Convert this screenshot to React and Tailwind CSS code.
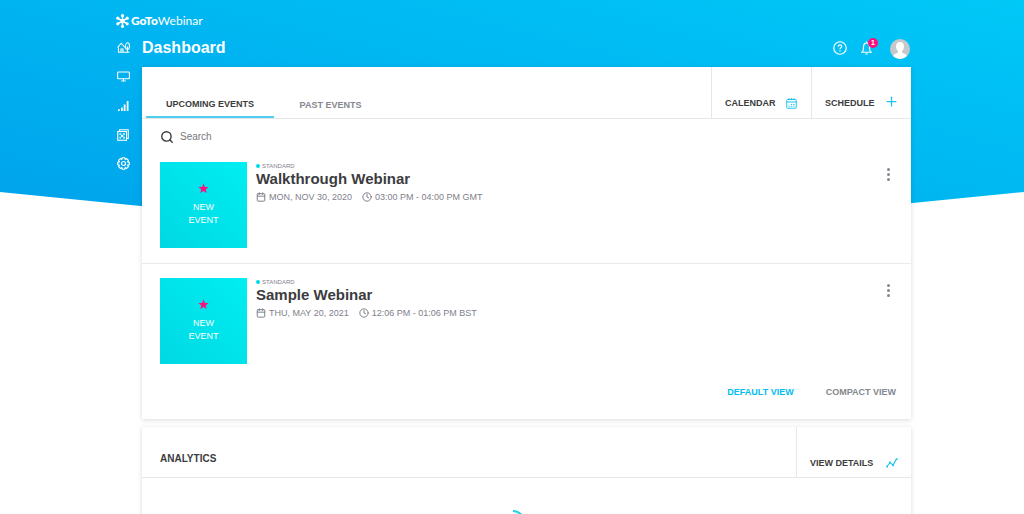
import { Search, Calendar, Clock, Plus } from 'lucide-react';

const events = [
  { id: 1, title: 'Walkthrough Webinar', date: 'MON, NOV 30, 2020', time: '03:00 PM - 04:00 PM GMT' },
  { id: 2, title: 'Sample Webinar', date: 'THU, MAY 20, 2021', time: '12:06 PM - 01:06 PM BST' },
];

const LogoMark = () => (
  <svg viewBox="0 0 26 28" className="w-[13px] h-[14px]" fill="none" stroke="currentColor" strokeWidth="3">
    <path d="M13 4v20M4.3 9l17.4 10M21.7 9L4.3 19" />
    <g fill="currentColor" stroke="none">
      <circle cx="13" cy="3.2" r="3.2" />
      <circle cx="13" cy="24.8" r="3.2" />
      <circle cx="3.6" cy="8.4" r="3.2" />
      <circle cx="22.4" cy="8.4" r="3.2" />
      <circle cx="3.6" cy="19.6" r="3.2" />
      <circle cx="22.4" cy="19.6" r="3.2" />
      <circle cx="13" cy="14" r="4" />
    </g>
  </svg>
);

const HomeIcon = () => (
  <svg viewBox="0 0 26 22" className="w-[13px] h-[11px]" fill="none" stroke="currentColor" strokeWidth="2.2">
    <path d="M1 11l7.500-8.500L16 11M3 9v11.500h22M8 20v-6h4v6" />
    <path d="M21 20V9M21 15c-3 0-4-2.500-4-5.500C17 5 19 1.500 21 1.500s4 3.500 4 8c0 3-1 5.500-4 5.500z" />
  </svg>
);

const ScreenIcon = () => (
  <svg viewBox="0 0 26 22" className="w-[13px] h-[11px]" fill="none" stroke="currentColor" strokeWidth="2.2">
    <rect x="1.200" y="2" width="23.600" height="13.500" rx="1.500" />
    <path d="M13 15.500V20M8.500 20h9" />
  </svg>
);

const BarsIcon = () => (
  <svg viewBox="0 0 24 24" className="w-3 h-3" fill="currentColor">
    <path d="M2 18.500h3.500V22H2zM8 15h3.500v7H8zM13.500 9H17v13h-3.500zM19.500 2H23v20h-3.500z" />
  </svg>
);

const LibraryIcon = () => (
  <svg viewBox="0 0 24 24" className="w-3 h-3" fill="none" stroke="currentColor" strokeWidth="2.2">
    <path d="M5 5V1.500h17.500V19H19" />
    <rect x="1.500" y="5" width="17.500" height="17.500" />
    <path d="M6 12V9.500h2.500M12 9.500h2.500V12M14.500 15.500V18H12M8.500 18H6v-2.500" />
    <rect x="9" y="12.500" width="2.500" height="2.500" fill="currentColor" />
  </svg>
);

const GearIcon = () => (
  <svg viewBox="0 0 26 26" className="w-[13px] h-[13px]" fill="none" stroke="currentColor" strokeWidth="2.4" strokeLinejoin="round">
    <path d="M10.500 1.500h5l.8 3.400 3 -1.800 3.600 3.600-1.800 3 3.400.8v5l-3.400.8 1.800 3-3.600 3.600-3-1.800-.8 3.400h-5l-.8-3.400-3 1.800-3.600-3.600 1.800-3-3.400-.8v-5l3.400-.8-1.800-3 3.600-3.600 3 1.800z" />
    <circle cx="13" cy="13" r="4" />
  </svg>
);

const CalendarGridIcon = () => (
  <svg viewBox="0 0 22 22" className="w-[11px] h-[11px] text-[#1cc4ee]" fill="none" stroke="currentColor" strokeWidth="2">
    <rect x="1.500" y="3" width="19" height="17.500" rx="1.500" />
    <path d="M1.500 8h19M6 0v4M11 0v4M16 0v4" />
    <path d="M5 16.500h2.500M9.700 13h2.600M9.700 16.500h2.600M14.500 13H17M14.500 16.500H17" strokeWidth="2.4" />
  </svg>
);

const StarIcon = () => (
  <svg viewBox="0 0 22 22" className="w-[11px] h-[11px]" fill="#ff0f7b">
    <path d="M11 .8l2.700 7 7.500.4-5.800 4.700 1.900 7.300L11 16.100l-6.300 4.100 1.900-7.300L.8 8.200l7.500-.4z" />
  </svg>
);

const navItems = [
  { label: 'Dashboard', icon: <HomeIcon /> },
  { label: 'Webinars', icon: <ScreenIcon /> },
  { label: 'Analytics', icon: <BarsIcon /> },
  { label: 'Library', icon: <LibraryIcon /> },
  { label: 'Settings', icon: <GearIcon /> },
];

const EventRow = ({ event }) => (
  <li className="flex items-start pl-[18px] pr-4 pt-[14px] pb-[15px] border-b border-[#e9eaec] last:border-b-0">
    <div className="w-[87px] h-[86px] shrink-0 flex flex-col items-center pt-[21px] bg-linear-to-tr from-[#00d8e4] to-[#00eef2] text-white text-[9px] leading-[13px] text-center">
      <StarIcon />
      <span className="mt-[7px]">NEW</span>
      <span>EVENT</span>
    </div>
    <div className="ml-[9px] text-[#7f808c] grow">
      <div className="flex items-center gap-[2px] text-[6px] leading-[8px]">
        <span className="w-1 h-1 rounded-full bg-[#00d8e8]"></span>
        STANDARD
      </div>
      <h2 className="text-[15px] leading-[18px] font-bold text-[#3c3c40]">{event.title}</h2>
      <div className="flex items-center mt-[3px] text-[9px] leading-[12px]">
        <Calendar size={10} strokeWidth={2.4} className="mr-[3px]" />
        <span>{event.date}</span>
        <Clock size={10} strokeWidth={2.4} className="ml-[10px] mr-[3px]" />
        <span>{event.time}</span>
      </div>
    </div>
    <button aria-label={`Options for ${event.title}`} className="w-[13px] h-6 flex flex-col items-center justify-center gap-[2px]">
      <span className="w-[3px] h-[3px] rounded-full bg-[#85868f]"></span>
      <span className="w-[3px] h-[3px] rounded-full bg-[#85868f]"></span>
      <span className="w-[3px] h-[3px] rounded-full bg-[#85868f]"></span>
    </button>
  </li>
);

const App = () => {
  return (
    <div className="relative min-h-screen bg-white font-['Liberation_Sans',Arial,sans-serif]">
      <div className="absolute inset-x-0 top-0 h-[243px] bg-linear-to-tr from-[#00a0ea] to-[#00c8f7] [clip-path:polygon(0_0,100%_0,100%_79%,50%_100%,0_79%)]"></div>

      <div className="relative pl-[116px] pr-[113px] pt-[13px]">
        <a href="#home" className="flex items-center gap-[2px] h-4 w-fit text-white font-[Lato,sans-serif] text-[12px] leading-4">
          <LogoMark />
          <span><b className="font-black">GoTo</b>Webinar</span>
        </a>

        <div className="flex">
          <nav className="w-[26px] shrink-0 flex flex-col pt-1 text-white">
            {navItems.map((item) => (
              <a key={item.label} href="#nav" aria-label={item.label} className="h-[29px] w-[14px] flex items-center justify-center">
                {item.icon}
              </a>
            ))}
          </nav>

          <main className="grow min-w-0">
            <header className="h-[38px] flex items-center justify-between pr-px text-white">
              <h1 className="text-[16px] leading-5 font-bold">Dashboard</h1>
              <div className="flex items-center">
                <button aria-label="Help" className="mr-[13px]">
                  <svg viewBox="0 0 28 28" className="w-[14px] h-[14px]" fill="none" stroke="currentColor" strokeWidth="2.4">
                    <circle cx="14" cy="14" r="12.500" />
                    <path d="M10.500 11.500c0-5 7-4.500 7-.5 0 2.500-3.500 2.500-3.500 5.500M14 18.500v2.500" />
                  </svg>
                </button>
                <button aria-label="Notifications" className="relative mr-4">
                  <svg viewBox="0 0 28 28" className="w-[14px] h-[14px]" fill="none" stroke="currentColor" strokeWidth="2.4">
                    <path d="M2 22.500h22M5 22c2-3 2-6 2-10 0-5 2-8 6-8s6 3 6 8c0 4 0 7 2 10M13 1v3M10.500 26h5" />
                  </svg>
                  <span className="absolute left-2 -top-[3px] w-[10px] h-[10px] rounded-full bg-[#ff0f7b] text-[7px] leading-[10px] font-bold text-center">1</span>
                </button>
                <button aria-label="Account">
                  <svg viewBox="0 0 40 40" className="w-5 h-5 mt-[2px] rounded-full">
                    <rect width="40" height="40" fill="#c6c8cb" />
                    <path d="M20 6c5.500 0 8 4 8 9 0 4-1.500 7-4 9.500 0 3 1 3.500 5 5 4 1.500 6 4 6 10.500H5c0-6.500 2-9 6-10.500 4-1.500 5-2 5-5-2.500-2.500-4-5.500-4-9.500 0-5 2.500-9 8-9z" fill="#fff" />
                  </svg>
                </button>
              </div>
            </header>

            <section className="bg-white shadow-[0_1px_5px_rgba(0,0,0,0.15)]">
              <div className="h-[52px] flex border-b border-[#e6e7e9] text-[9px] leading-[12px] font-bold">
                <div role="tablist" className="flex grow pl-1">
                  <button role="tab" aria-selected="true" className="w-32 flex items-end justify-center pb-[6px] border-b-2 border-[#4fcdee] text-[#3c3c40]">UPCOMING EVENTS</button>
                  <button role="tab" aria-selected="false" className="w-[113px] flex items-end justify-center pb-[7px] text-[#85868f]">PAST EVENTS</button>
                </div>
                <button className="w-[100px] flex items-end justify-between pl-[13px] pr-[14px] pb-[9px] border-l border-[#e6e7e9] text-[#3c3c40]">
                  CALENDAR
                  <CalendarGridIcon />
                </button>
                <button className="w-[100px] flex items-end justify-between pl-[13px] pr-3 pb-[9px] border-l border-[#e6e7e9] text-[#3c3c40]">
                  SCHEDULE
                  <Plus size={15} strokeWidth={2} className="text-[#1cc4ee]" />
                </button>
              </div>

              <label className="flex items-center gap-[6px] h-[29px] pt-[7px] pl-[18px] pr-4 text-[#3c3c40]">
                <Search size={14} strokeWidth={2.4} />
                <input type="text" aria-label="Search" placeholder="Search" className="grow pb-px text-[10px] leading-[14px] outline-none placeholder:text-[#77787f]" />
              </label>

              <ul>
                {events.map((event) => (
                  <EventRow key={event.id} event={event} />
                ))}
              </ul>

              <div className="h-10 pt-[7px] pr-[15px] flex items-start justify-end gap-8 text-[9px] leading-[12px] font-bold">
                <button className="text-[#00bdf2]">DEFAULT VIEW</button>
                <button className="text-[#85868f]">COMPACT VIEW</button>
              </div>
            </section>

            <section className="mt-2 bg-white shadow-[0_1px_5px_rgba(0,0,0,0.15)]">
              <div className="h-[51px] flex justify-between border-b border-[#e6e7e9] font-bold text-[#3c3c40]">
                <h2 className="pl-[18px] pt-[26px] text-[10px] leading-[12px]">ANALYTICS</h2>
                <button className="w-[115px] flex items-end justify-between px-[13px] pb-[8px] border-l border-[#e6e7e9] text-[9px] leading-[12px]">
                  VIEW DETAILS
                  <svg viewBox="0 0 24 24" className="w-3 h-3" fill="none" stroke="#1cc4ee" strokeWidth="2.4">
                    <path d="M2 19l6-8 6 5 7-12" />
                    <path d="M.5 19H4M6 10.500h3.500M12.500 16.500H16M19.500 4H23" strokeWidth="3.500" />
                  </svg>
                </button>
              </div>
              <div className="h-16 pt-8 pr-7 flex justify-center">
                <svg viewBox="0 0 24 24" className="w-6 h-6" fill="none" stroke="#1fd3e6" strokeWidth="2">
                  <path d="M12 1a11 11 0 0 1 11 11" />
                </svg>
              </div>
            </section>
          </main>
        </div>
      </div>
    </div>
  );
};

export default App;
